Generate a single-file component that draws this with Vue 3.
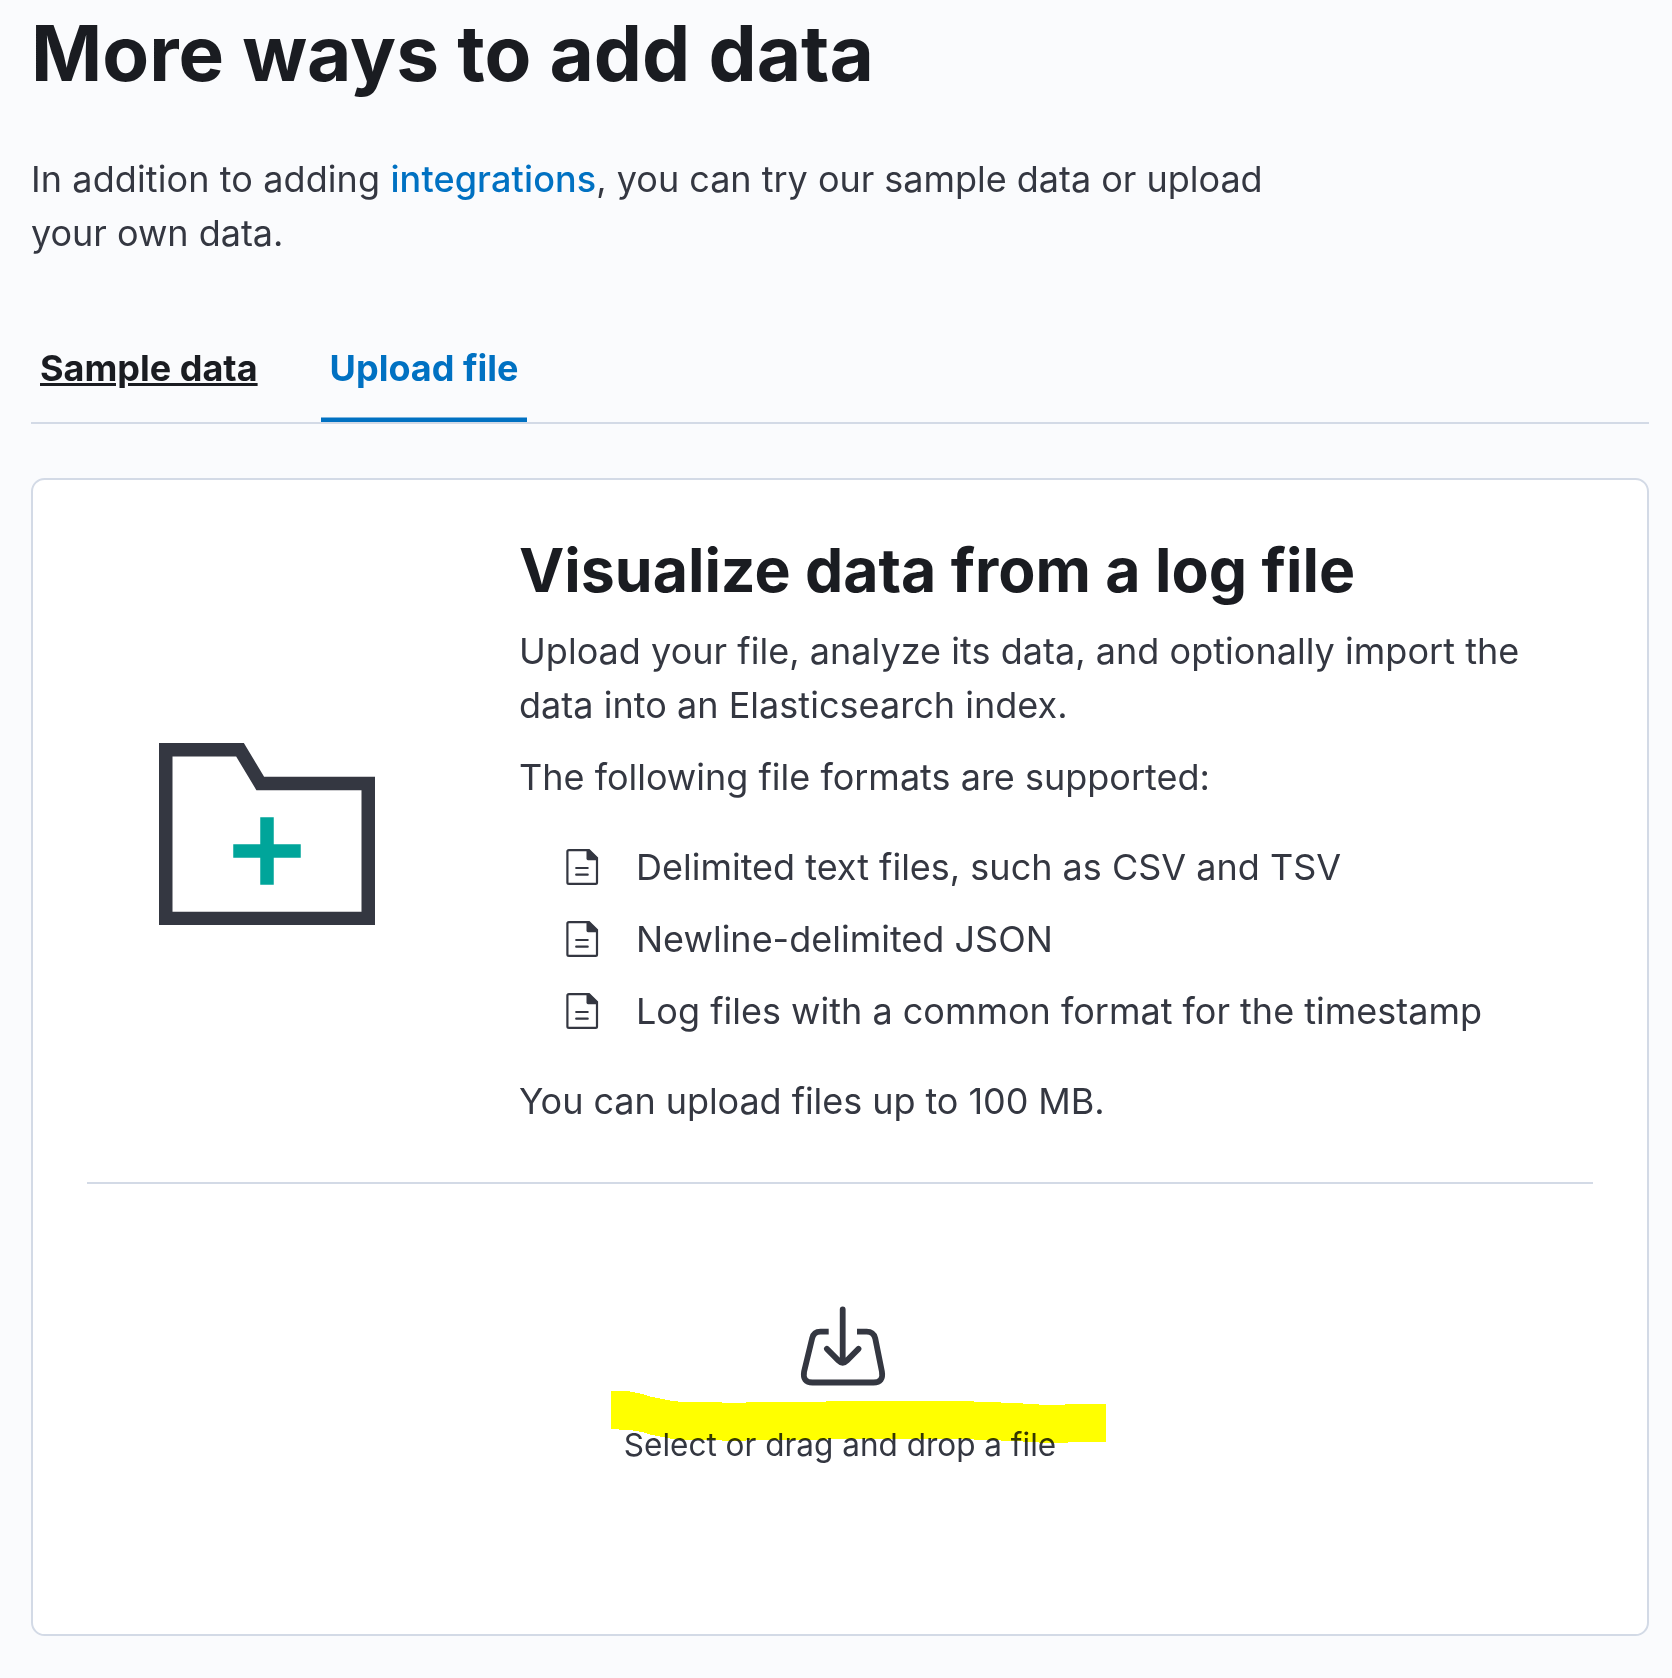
<script setup>
const formats = [
  'Delimited text files, such as CSV and TSV',
  'Newline-delimited JSON',
  'Log files with a common format for the timestamp',
]
</script>

<template>
  <main class="page">
    <h1 class="title">More ways to add data</h1>
    <p class="intro">
      <span class="lead">In addition to adding </span><a class="link">integrations</a>, you can try our sample data or upload your own data.
    </p>

    <nav class="tabs">
      <a class="tab hovered">Sample data</a>
      <a class="tab selected">Upload file</a>
    </nav>

    <section class="panel">
      <div class="about">
        <svg class="folder" viewBox="0 0 32 27">
          <path fill="#343741" d="M32 27H0V0h12.57l3 5H32v22zM2 25h28V7H14.43l-3-5H2v23z" />
          <path fill="#00a59a" d="M21 15h-4v-4h-2v4h-4v2h4v4h2v-4h4z" />
        </svg>
        <div class="copy">
          <h2 class="heading">Visualize data from a log file</h2>
          <p class="summary">Upload your file, analyze its data, and optionally import the data into an Elasticsearch index.</p>
          <p>The following file formats are supported:</p>
          <ul class="formats">
            <li v-for="format in formats" :key="format">
              <svg class="doc" viewBox="0 0 36 36">
                <path
                  fill="none"
                  stroke="#343741"
                  stroke-width="2.2"
                  d="M5 1.1H25L33 9V33.5Q33 34.9 31.6 34.9H5Q3.4 34.9 3.4 33.5V2.5Q3.4 1.1 5 1.1Z"
                />
                <path fill="#343741" d="M22.500 1H25.5L33.5 9V11.2H24Q22.5 11.2 22.5 9.8Z" />
                <path stroke="#343741" stroke-width="2.2" stroke-linecap="round" d="M12.2 19H23.7M12.2 25.7H23.7" />
              </svg>
              <span>{{ format }}</span>
            </li>
          </ul>
          <p class="limit">You can upload files up to 100 MB.</p>
        </div>
      </div>

      <hr class="rule" />

      <div class="picker">
        <svg class="import" viewBox="0 0 90 84">
          <g fill="none" stroke="#343741" stroke-width="5.8">
            <path
              d="M30.7 29.7H22.5Q15.7 29.7 14.2 36.2L6.1 69.5Q4.2 80.500 14.5 80.500H75.500Q85.8 80.500 83.9 69.5L77.2 36.2Q75.4 29.7 68.6 29.7H59"
            />
            <path stroke-linecap="round" d="M44.7 7.5V60M28.9 46.9L40.3 58.4Q44.7 62.8 49.1 58.4L60.5 46.9" />
          </g>
        </svg>
        <div class="prompt">
          Select or drag and drop a file
          <svg class="marker" viewBox="0 0 495 52" shape-rendering="crispEdges">
            <path
              fill="#ffff00"
              d="M0 0H16L22 1L31 3L41 6L51 8L62 10L71 11H111V12H135V11H215V10H363V11H390V12H412V13H428V14H454V13H495V51H457V52H428V51H412V50H390V49H363V48H215V49H135V50H111V49H71L62 48L51 46L41 44L31 41L22 39.500L16 39L0 38Z"
            />
          </svg>
        </div>
      </div>
    </section>
  </main>
</template>

<style>
body {
  margin: 0;
  background: #fafbfd;
}
</style>

<style scoped>
.page {
  box-sizing: border-box;
  width: 1672px;
  height: 1678px;
  padding: 8px 23px 0 31px;
  overflow: hidden;
  background: #fafbfd;
  color: #343741;
  font: 400 36px/54px Inter, sans-serif;
}
h1,
h2,
p,
ul {
  margin: 0;
  padding: 0;
}
.title {
  color: #1a1c21;
  font-size: 76.5px;
  font-weight: 700;
  line-height: 90px;
}
.intro {
  width: 1260px;
  margin-top: 54px;
  letter-spacing: -0.02px;
}
.lead {
  letter-spacing: 0.1px;
}
.link {
  color: #0071c2;
  font-weight: 500;
  letter-spacing: 0.13px;
}
.tabs {
  display: flex;
  gap: 54px;
  margin-top: 54px;
  border-bottom: 2px solid #d3dae6;
}
.tab {
  padding: 27px 9px;
  color: #1a1c21;
  font-weight: 700;
}
.hovered {
  text-decoration: underline;
}
.selected {
  padding-right: 8px;
  color: #0071c2;
  box-shadow: inset 0 -4.5px 0 #0071c2;
}
.panel {
  box-sizing: border-box;
  height: 1158px;
  margin-top: 54px;
  padding: 54px;
  border: 2px solid #d3dae6;
  border-radius: 13.5px;
  background: #fff;
}
.about {
  display: flex;
  align-items: flex-start;
}
.folder {
  flex: none;
  width: 216px;
  height: 182.25px;
  margin: 209px 144px 0 72px;
}
.copy {
  flex: 1;
}
.heading {
  margin-bottom: 18px;
  color: #1a1c21;
  font-size: 60.75px;
  font-weight: 700;
  line-height: 72px;
}
.summary {
  letter-spacing: 0.03px;
}
.limit {
  letter-spacing: -0.06px;
}
.copy p + p {
  margin-top: 18px;
}
.formats {
  display: flex;
  flex-direction: column;
  gap: 18px;
  margin: 36px 0;
  list-style: none;
}
.formats li {
  display: flex;
  align-items: center;
  gap: 36px;
  padding-left: 45px;
}
.doc {
  width: 36px;
  height: 36px;
}
.rule {
  height: 2px;
  margin: 54px 0 0;
  border: 0;
  background: #d3dae6;
}
.picker {
  display: flex;
  flex-direction: column;
  align-items: center;
  padding-top: 118px;
}
.import {
  width: 90px;
  height: 84px;
  margin-left: 5px;
}
.prompt {
  position: relative;
  margin-top: 35px;
  font-size: 31.5px;
  line-height: 47px;
  white-space: nowrap;
}
/* Highlighter stroke drawn over the prompt */
.marker {
  position: absolute;
  top: -30px;
  left: -13px;
  width: 495px;
  height: 52px;
  mix-blend-mode: multiply;
}
</style>
